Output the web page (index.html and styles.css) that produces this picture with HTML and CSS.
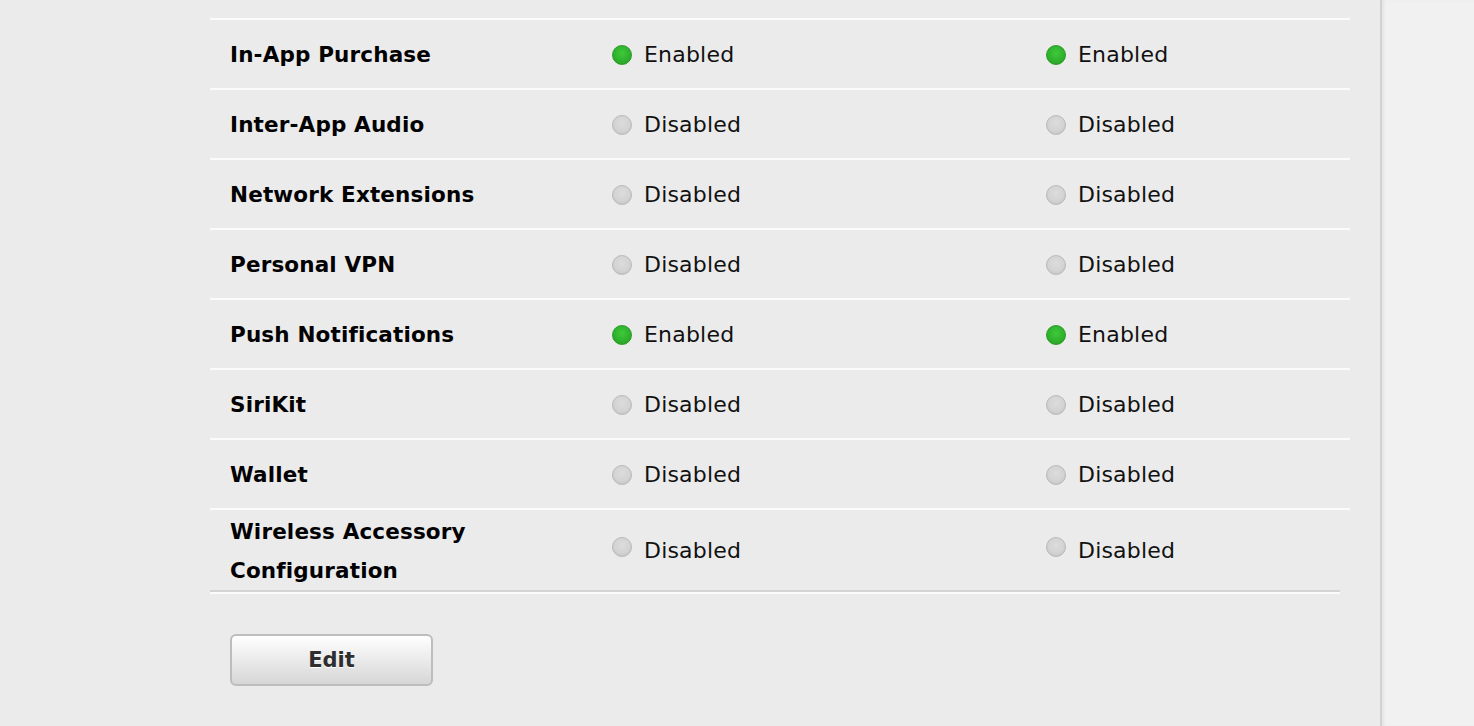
FILE: index.html
```html
<!DOCTYPE html>
<html>
<head>
<meta charset="utf-8">
<link rel="stylesheet" href="styles.css">
</head>
<body>
<div class="page">
  <main class="main">
    <div class="table">
      <div class="row">
        <div class="cell name">In-App Purchase</div>
        <div class="cell status"><span class="dot on"></span><span class="label">Enabled</span></div>
        <div class="cell status"><span class="dot on"></span><span class="label">Enabled</span></div>
      </div>
      <div class="row">
        <div class="cell name">Inter-App Audio</div>
        <div class="cell status"><span class="dot"></span><span class="label">Disabled</span></div>
        <div class="cell status"><span class="dot"></span><span class="label">Disabled</span></div>
      </div>
      <div class="row">
        <div class="cell name">Network Extensions</div>
        <div class="cell status"><span class="dot"></span><span class="label">Disabled</span></div>
        <div class="cell status"><span class="dot"></span><span class="label">Disabled</span></div>
      </div>
      <div class="row">
        <div class="cell name">Personal VPN</div>
        <div class="cell status"><span class="dot"></span><span class="label">Disabled</span></div>
        <div class="cell status"><span class="dot"></span><span class="label">Disabled</span></div>
      </div>
      <div class="row">
        <div class="cell name">Push Notifications</div>
        <div class="cell status"><span class="dot on"></span><span class="label">Enabled</span></div>
        <div class="cell status"><span class="dot on"></span><span class="label">Enabled</span></div>
      </div>
      <div class="row">
        <div class="cell name">SiriKit</div>
        <div class="cell status"><span class="dot"></span><span class="label">Disabled</span></div>
        <div class="cell status"><span class="dot"></span><span class="label">Disabled</span></div>
      </div>
      <div class="row">
        <div class="cell name">Wallet</div>
        <div class="cell status"><span class="dot"></span><span class="label">Disabled</span></div>
        <div class="cell status"><span class="dot"></span><span class="label">Disabled</span></div>
      </div>
      <div class="row row-tall">
        <div class="cell name">Wireless Accessory<br>Configuration</div>
        <div class="cell status"><span class="dot"></span><span class="label">Disabled</span></div>
        <div class="cell status"><span class="dot"></span><span class="label">Disabled</span></div>
      </div>
    </div>
    <div class="table-end"></div>
    <div class="actions">
      <button class="btn">Edit</button>
    </div>
  </main>
  <aside class="side"></aside>
</div>
</body>
</html>
```

FILE: styles.css
```css
html, body {
  margin: 0;
  padding: 0;
  height: 100%;
  overflow: hidden;
}
body {
  background: #ebebeb;
  font-family: "DejaVu Sans", "Lucida Grande", sans-serif;
  color: #000;
}
.page {
  display: flex;
  height: 726px;
}
.main {
  width: 1380px;
  flex: none;
  box-sizing: border-box;
  padding: 18px 0 0 210px;
  background: #ebebeb;
}
.side {
  flex: 1;
  background: #f1f1f1;
  border-left: 2px solid #d2d2d2;
  box-shadow: inset 3px 0 3px -1px rgba(0,0,0,0.06);
}
.table {
  width: 1140px;
}
.row {
  display: grid;
  grid-template-columns: 382px 434px 1fr;
  border-top: 2px solid #fbfbfb;
  min-height: 68px;
}
.cell {
  display: flex;
  align-items: center;
  box-sizing: border-box;
  padding: 2px 0 0 20px;
  line-height: 40px;
}
.name {
  font-weight: bold;
  font-size: 21.5px;
  letter-spacing: 0.15px;
}
.row-tall .name {
  line-height: 39px;
}
.status {
  font-size: 22px;
  letter-spacing: 0.2px;
  color: #111;
}
.dot {
  width: 20px;
  height: 20px;
  border-radius: 50%;
  flex: none;
  box-sizing: border-box;
  align-self: flex-start;
  margin-top: 23px;
  margin-right: 12px;
  background: radial-gradient(circle at 50% 40%, #dcdcdc 0%, #d3d3d3 55%, #bcbcbc 100%);
  border: 1px solid #b9b9b9;
}
.dot.on {
  background: radial-gradient(circle at 50% 40%, #3fc93c 0%, #2fb22d 55%, #24991f 100%);
  border-color: #2a9b26;
}
.row-tall .dot {
  margin-top: 25px;
}
.table-end {
  width: 1130px;
  border-top: 2px solid #d3d3d3;
  border-bottom: 2px solid #fbfbfb;
}
.actions {
  padding: 40px 0 0 20px;
}
.btn {
  width: 203px;
  height: 52px;
  box-sizing: border-box;
  border: 2px solid #bdbdbd;
  border-radius: 6px;
  background: linear-gradient(#ffffff, #d6d6d6);
  font-family: "DejaVu Sans", sans-serif;
  font-weight: bold;
  font-size: 21px;
  color: #2e2e2e;
  text-shadow: 0 1px 0 #fff;
  padding: 0;
}
```
